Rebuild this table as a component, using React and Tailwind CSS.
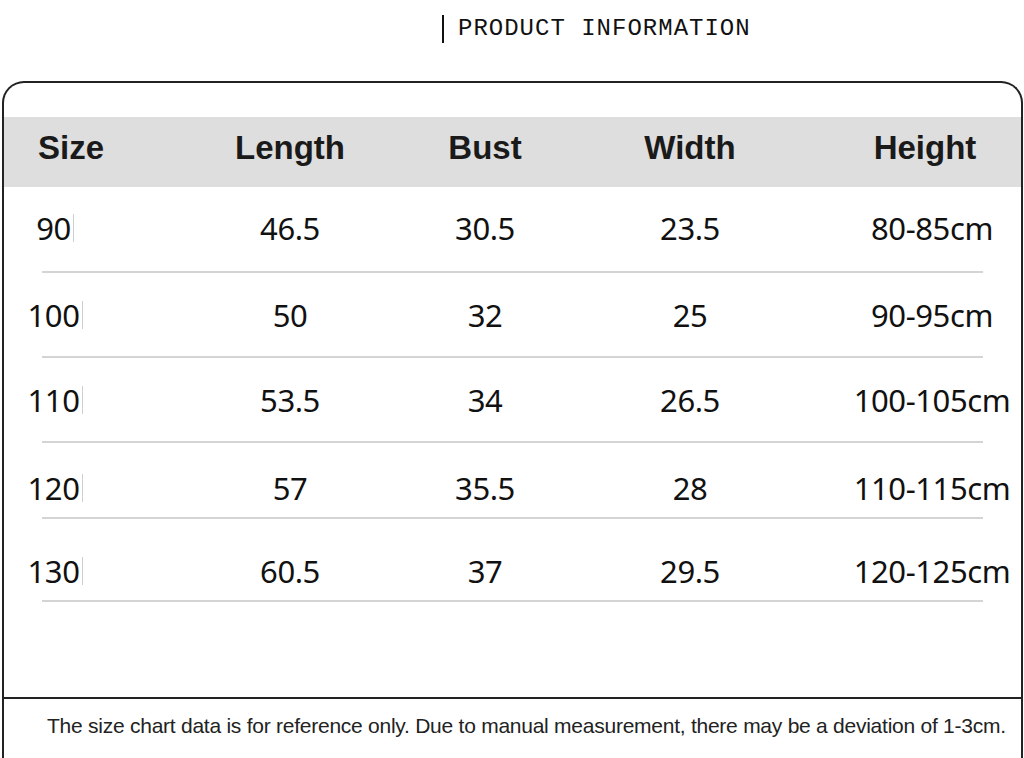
const headers = [
  { label: "Size", w: "w-[134px]" },
  { label: "Length", w: "w-[304px]" },
  { label: "Bust", w: "w-[86px]" },
  { label: "Width", w: "w-[324px]" },
  { label: "Height", w: "w-[146px]" },
];

const colW = ["w-[102px]", "w-[368px]", "w-[22px]", "w-[388px]", "w-[96px]"];

const rows = [
  { size: "90", vals: ["46.5", "30.5", "23.5", "80-85cm"], pt: "pt-[21px]", pb: "pb-[23px]" },
  { size: "100", vals: ["50", "32", "25", "90-95cm"], pt: "pt-[22px]", pb: "pb-[21px]" },
  { size: "110", vals: ["53.5", "34", "26.5", "100-105cm"], pt: "pt-[22px]", pb: "pb-[21px]" },
  { size: "120", vals: ["57", "35.5", "28", "110-115cm"], pt: "pt-[25px]", pb: "pb-[9px]" },
  { size: "130", vals: ["60.5", "37", "29.5", "120-125cm"], pt: "pt-[32px]", pb: "pb-[9px]" },
];

const dataFont = { fontFamily: '"Noto Sans", "Open Sans", sans-serif' };

const App = () => {
  return (
    <div className="w-[1024px] h-[758px] bg-white overflow-hidden flex flex-col text-[#111]">
      {/* title */}
      <div className="flex items-center pl-[442px] pt-[15px]">
        <div className="w-[2px] h-[28px] bg-[#111]" />
        <span className="ml-[14px] text-[24px] leading-[28px] tracking-[1px] font-['Liberation_Mono',monospace]">
          PRODUCT INFORMATION
        </span>
      </div>

      <div className="mt-[38px] ml-[2px] mr-[1px] flex-1 border-2 border-b-0 border-[#222] rounded-t-[22px] flex flex-col">
        <div className="h-[614px] pt-[34px]">
          <div className="h-[70px] pb-[8px] bg-[#dedede] flex items-center font-['Liberation_Sans',Arial,sans-serif] font-bold text-[33px] text-[#1a1a1a]">
            {headers.map((h) => (
              <div key={h.label} className={`${h.w} flex justify-center whitespace-nowrap`}>
                {h.label}
              </div>
            ))}
          </div>

          {rows.map((r) => (
            <div key={r.size} className={`${r.pt} ${r.pb}`}>
              <div className="h-[40px] flex items-center text-[31px] tracking-[-0.4px]" style={dataFont}>
                <div className={`${colW[0]} flex justify-center items-center whitespace-nowrap`}>
                  {r.size}
                  <span className="ml-[1px] w-[2px] h-[28px] border-r border-[#cfcfcf]" />
                </div>
                {r.vals.map((v, i) => (
                  <div key={i} className={`${colW[i + 1]} flex justify-center whitespace-nowrap`}>
                    {v}
                  </div>
                ))}
              </div>
            </div>
          )).reduce((acc, el, i) => {
            acc.push(el);
            acc.push(<div key={"l" + i} className="ml-[38px] w-[941px] h-[2px] bg-[#d4d4d4]" />);
            return acc;
          }, [])}
        </div>

        <div className="flex-1 border-t-2 border-[#222] pl-[43px] pt-[15px]">
          <p className="text-[21px] leading-[24px] tracking-[-0.25px] text-[#222] font-['Liberation_Sans',Arial,sans-serif] whitespace-nowrap">
            The size chart data is for reference only. Due to manual measurement, there may be a deviation of 1-3cm.
          </p>
        </div>
      </div>
    </div>
  );
};

export default App;
